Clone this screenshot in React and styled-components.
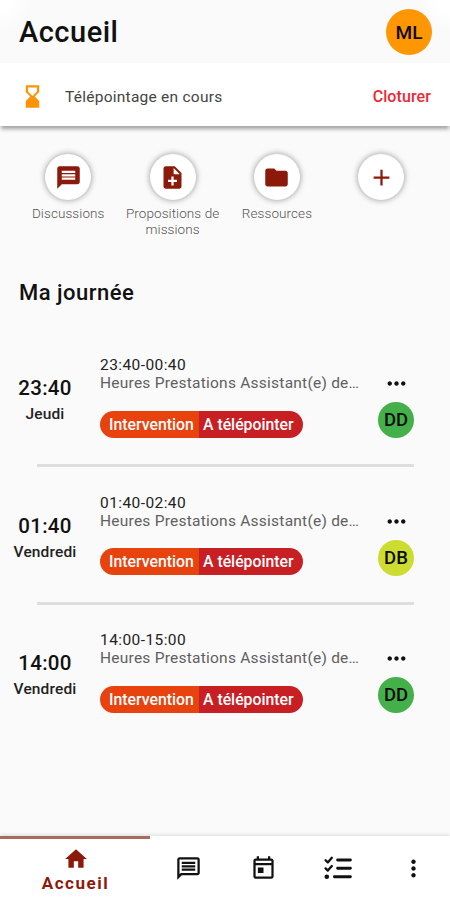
import React from 'react';
import styled, { createGlobalStyle } from 'styled-components';
import {
  MdAdd,
  MdFolder,
  MdHome,
  MdHourglassBottom,
  MdMessage,
  MdMoreHoriz,
  MdMoreVert,
  MdNoteAdd,
  MdOutlineMessage,
  MdOutlineToday,
} from 'react-icons/md';

const GlobalStyle = createGlobalStyle`
  * {
    box-sizing: border-box;
  }

  body {
    margin: 0;
    background: #fafafa;
    font-family: Roboto, sans-serif;
    color: #111;
  }

  svg {
    display: block;
  }
`;

const Screen = styled.div`
  display: flex;
  flex-direction: column;
  width: 450px;
  height: 900px;
  overflow: hidden;
  background:
    radial-gradient(circle at 0 0, #fff 12px, transparent 32px),
    radial-gradient(circle at 100% 0, #fff 12px, transparent 32px),
    #fafafa;
`;

const Header = styled.header`
  display: flex;
  align-items: center;
  justify-content: space-between;
  height: 63px;
  flex: none;
  padding: 1px 18px 0 19px;
`;

const Title = styled.h1`
  margin: 0;
  font-size: 29px;
  line-height: 34px;
  font-weight: 500;
  letter-spacing: 0.5px;
`;

const Avatar = styled.div`
  display: flex;
  align-items: center;
  justify-content: center;
  width: ${props => props.size}px;
  height: ${props => props.size}px;
  border-radius: 50%;
  background: ${props => props.color};
  color: #0c0c0c;
  font-size: ${props => props.font || 19}px;
  font-weight: 500;
`;

const Banner = styled.div`
  display: flex;
  align-items: center;
  height: 63px;
  flex: none;
  padding: 4px 19px 0;
  background: #fff;
  box-shadow: 0 4px 4px -1px rgba(0, 0, 0, 0.36);

  svg {
    color: #ff9307;
  }
`;

const BannerText = styled.span`
  flex: 1;
  margin-left: 19px;
  font-size: 15.5px;
  letter-spacing: 0.25px;
  color: #444;
`;

const BannerAction = styled.button`
  padding: 0;
  border: 0;
  background: none;
  font-family: inherit;
  font-size: 16px;
  font-weight: 500;
  letter-spacing: 0.1px;
  color: #ee2733;
`;

const Shortcuts = styled.div`
  display: grid;
  grid-template-columns: repeat(4, 104.4px);
  height: 127px;
  flex: none;
  padding: 28px 16px 0;
`;

const Shortcut = styled.div`
  display: flex;
  flex-direction: column;
  align-items: center;
  font-size: 13.5px;
  line-height: 16px;
  font-weight: 300;
  letter-spacing: 0.08px;
  text-align: center;
  color: #555;
`;

const Round = styled.div`
  display: flex;
  align-items: center;
  justify-content: center;
  width: 46px;
  height: 46px;
  flex: none;
  margin: 0 0 5px;
  border-radius: 50%;
  background: #fff;
  box-shadow: 0 0 6px rgba(0, 0, 0, 0.42);
  color: #8c1a0b;
`;

const Section = styled.h2`
  flex: none;
  margin: 26px 0 0 19px;
  font-size: 22px;
  line-height: 28px;
  font-weight: 500;
  letter-spacing: 0.5px;
`;

const Day = styled.main`
  flex: 1;
  padding-top: 48px;
`;

const Visit = styled.article`
  display: grid;
  grid-template-columns: 90px 262px 1fr;
  column-gap: 10px;
  height: 109px;
`;

const Divider = styled.hr`
  width: 377px;
  height: 3px;
  margin: 0 0 25.5px 37px;
  border: 0;
  background: #dedede;
`;

const When = styled.div`
  padding-top: 21px;
  text-align: center;
`;

const Hour = styled.div`
  font-size: 20.5px;
  line-height: 24px;
  font-weight: 500;
  letter-spacing: 0.3px;
`;

const Weekday = styled.div`
  margin-top: 4px;
  font-size: 15.5px;
  line-height: 20px;
  font-weight: 500;
  letter-spacing: 0.15px;
  color: #222;
`;

const Range = styled.div`
  margin-top: 1px;
  font-size: 15.5px;
  line-height: 18px;
  letter-spacing: 0.42px;
  color: #222;
`;

const Label = styled.div`
  font-size: 15.5px;
  line-height: 18px;
  letter-spacing: 0.24px;
  color: #606060;
  white-space: nowrap;
`;

const Chip = styled.div`
  display: inline-flex;
  height: 27px;
  margin-top: 18.5px;
  overflow: hidden;
  border-radius: 14px;
  font-size: 15.8px;
  line-height: 28px;
  font-weight: 500;
  color: #fff;
`;

const Kind = styled.span`
  width: 99px;
  padding-left: 9px;
  background: #e8430f;
`;

const Status = styled.span`
  width: 104px;
  padding-left: 4px;
  background: #c81f25;
`;

const Side = styled.div`
  display: flex;
  flex-direction: column;
  align-items: center;
  width: 48px;
  padding-top: 15px;

  ${Avatar} {
    margin-top: 5px;
  }
`;

const TabBar = styled.nav`
  display: grid;
  grid-template-columns: 150px repeat(4, 75px);
  height: 64px;
  flex: none;
  background: #fff;
  box-shadow: 0 -1px 4px rgba(0, 0, 0, 0.13);
`;

const Tab = styled.div`
  display: flex;
  flex-direction: column;
  align-items: center;
  justify-content: center;
  padding: ${props => (props.active ? '0 0 0 1px' : '0 0 3px 1px')};
  border-top: 3px solid ${props => (props.active ? '#a76b5e' : 'transparent')};
  color: ${props => (props.active ? '#8c1a0b' : '#111')};
  font-size: 17px;
  line-height: 22px;
  font-weight: 700;
  letter-spacing: 1.5px;
`;

const ChecklistIcon = () => (
  <svg width="28" height="24" viewBox="0 0 28 24" fill="none" stroke="currentColor" strokeLinecap="round" strokeLinejoin="round">
    <path d="M1.6 4.2l2.2 2.2 4-4.6M1.6 12.4l2.2 2.2 4-4.6" strokeWidth="2.3" />
    <path d="M13.6 4H26.4M13.6 12.3H26.4M10.4 20.8H26.4" strokeWidth="2.9" />
    <circle cx="2.8" cy="20.8" r="2.3" fill="currentColor" stroke="none" />
  </svg>
);

const shortcuts = [
  { label: 'Discussions', icon: MdMessage },
  { label: 'Propositions de missions', icon: MdNoteAdd },
  { label: 'Ressources', icon: MdFolder },
  { label: '', icon: MdAdd },
];

const visits = [
  { hour: '23:40', day: 'Jeudi', range: '23:40-00:40', initials: 'DD', color: '#43b049' },
  { hour: '01:40', day: 'Vendredi', range: '01:40-02:40', initials: 'DB', color: '#cddc30' },
  { hour: '14:00', day: 'Vendredi', range: '14:00-15:00', initials: 'DD', color: '#43b049' },
];

const App = () => (
  <Screen>
    <GlobalStyle />
    <Header>
      <Title>Accueil</Title>
      <Avatar size={46} color="#ff9704">ML</Avatar>
    </Header>
    <Banner>
      <MdHourglassBottom size={27} />
      <BannerText>Télépointage en cours</BannerText>
      <BannerAction>Cloturer</BannerAction>
    </Banner>
    <Shortcuts>
      {shortcuts.map(({ label, icon: Icon }, i) => (
        <Shortcut key={i}>
          <Round><Icon size={27} /></Round>
          {label}
        </Shortcut>
      ))}
    </Shortcuts>
    <Section>Ma journée</Section>
    <Day>
      {visits.map((visit, i) => (
        <React.Fragment key={visit.range}>
          {i > 0 && <Divider />}
          <Visit>
            <When>
              <Hour>{visit.hour}</Hour>
              <Weekday>{visit.day}</Weekday>
            </When>
            <div>
              <Range>{visit.range}</Range>
              <Label>Heures Prestations Assistant(e) de…</Label>
              <Chip>
                <Kind>Intervention</Kind>
                <Status>A télépointer</Status>
              </Chip>
            </div>
            <Side>
              <MdMoreHoriz size={27} />
              <Avatar size={36} color={visit.color} font={18.5}>{visit.initials}</Avatar>
            </Side>
          </Visit>
        </React.Fragment>
      ))}
    </Day>
    <TabBar>
      <Tab active>
        <MdHome size={26} />
        Accueil
      </Tab>
      <Tab><MdOutlineMessage size={27} /></Tab>
      <Tab><MdOutlineToday size={27} /></Tab>
      <Tab><ChecklistIcon /></Tab>
      <Tab><MdMoreVert size={27} /></Tab>
    </TabBar>
  </Screen>
);

export default App;
